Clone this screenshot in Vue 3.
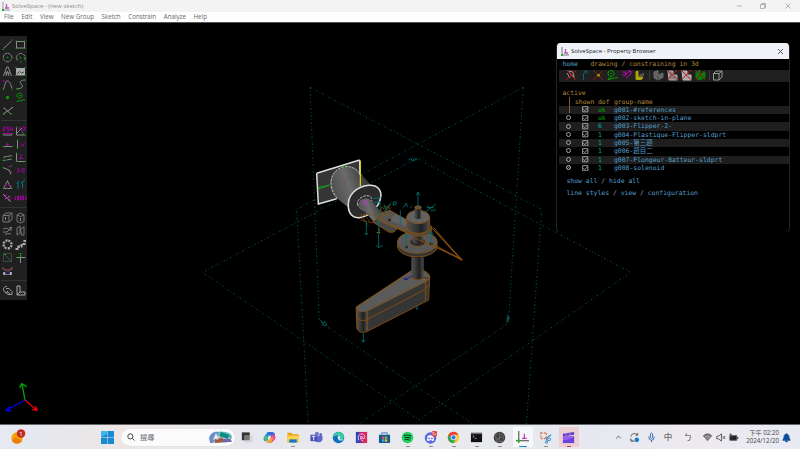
<script setup>
const menus = ['File', 'Edit', 'View', 'New Group', 'Sketch', 'Constrain', 'Analyze', 'Help']

const G = '#00a000', W = '#8a8a8a', M = '#a000a0', T = '#007878'
// each entry is [path, stroke colour, fill colour, stroke width, dash pattern]
const toolGroups = [
  [
    [['M2.5 10.5 10.5 3', W], ['M1.5 11.5h1.5M10.5 2h1.5', G]],
    [['M2.5 3.5h8v6.500h-8z', W], ['M1.500 3h1.500M10 3h1.500M1.500 10.500h1.500M10 10.500h1.500', G]],
    [['M6.500 2.200a4.300 4.300 0 1 0 .1 0', W, 'none', 1, '3 .8'], ['M5.800 6.500h1.500', G, 'none', 1.5], ['M10.500 6.500h1', G]],
    [['M3.500 9.500a4.300 4.300 0 1 1 7-.5', W, 'none', 1, '3 .8'], ['M5.800 6.500h1.500', G, 'none', 1.5], ['M6 11h1.500M10 8.500h1.500M1.500 6.500h1', G]],
    [['M2.500 11 5.800 2h1.400l3.300 9M4 8h5M5 11l1.500-5L8 11', W]],
    [['M2.500 3.500h8V10h-8z', '#aaa', '#aaa'], ['M3 9l2.500-2.500 2 1.500L10 7', '#444'], ['M1 2.500h1.500M10.500 2.500H12M1 10.500h1.500M10.500 10.500H12', G]],
    [['M2.500 11C4 8 4 3 6.500 3s3 4 4.500 7', W], ['M1.500 3h3', M], ['M1.500 11.500H3M10.500 11H12', G]],
    [['M11 2C7 2 5 4 7 6s3 4-4 5', W], ['M10.500 2H12M2 11h2M6.500 6h1', G]],
    [['M5.500 5.500h2v2h-2z', G, G]],
    [['M5.500 2a2.500 2.500 0 1 0 .1 0M5 4.500h1.500M2.500 10.500 11 8.500', G]],
    [['M2 10 11 4M3 4l7 6', W], ['M2 4h1.500M2 10.500h1.500M10 10h1.500', G], ['M10.500 3.500h1.500', W]]
  ],
  [
    [['M2 9.500h9M2 3h2v2H2v2h2M6 7h2V5H6V3h2M9.500 3v2.500H12M11.500 3v4', M], ['M2 11h9', W], ['M1 10.200h1M11 10.200h1', G]],
    [['M2.500 11V3.500M2.500 11h8M3 9l5-5', W], ['M4 4h3M8 3h3v3H8v2', M], ['M2 3h1M10.500 11H12M8 8l2 2', G]],
    [['M2 8.500h9', W], ['M5 6.500h3M6.500 5v3', M], ['M1.500 8.500H3M10 8.500h2', G]],
    [['M3.500 2v9', W], ['M6.500 5l2 3.500 2-3.500', M], ['M3 2h1M3 10.500h1', G]],
    [['M3 6l3-.5M7 5.300l4-.7M2 9.500l3-.5M6 9l4-1', W], ['M1.500 9.500h1.500M6 5.500h1M2 6.500h1M10 8.500h1', G]],
    [['M2.500 2v8.500H11', W], ['M7 3v4.500M5 7.500h4', M], ['M2 2h1M2 10.500h1.500M10.500 10.500H12', G]],
    [['M3 4 8 6l2 4.500M2 4h1', W], ['M7 3l3-1M9 6l2 3', M], ['M1.500 3.500H3M7 6h1.500M9.500 2H11', G]],
    [['M3 5h2v3H3M8 5h3M8 5v3h3', M]],
    [['M6.500 3 2.500 10.500h8z', W], ['M4 6.500l2 .5M9 6.500l-2 .5M6.500 9v2.500', M], ['M6 2.500h1M1.500 10.500h2M9.500 10.500h2', G]],
    [['M4 11V4M2.500 6 5.500 3M8.500 10V4M7 5l4-3', T]],
    [['M2 3l8 8M4 8l5-3', W], ['M3 6l3-3M7 10l3-3M5 6l3 2', M]],
    [['M1.500 5v4M3.500 5v4h1V5zM6.500 5v4M8 5v4h1.500V5zM12 5v4', M]]
  ],
  [
    [['M2 4.500h6V11H2zM2 4.500 5 2h6L8 4.500M11 2v6.500L8 11', '#777'], ['M4.500 6v3', W]],
    [['M3 4l3.500-2L10 4v6.500L6.500 12 3 10.500zM3 4l3.500 1.500L10 4', '#777'], ['M6.500 7v3', W]],
    [['M2 5l3-1 3 1.500 3-1.500M2 8h4l2-2h3M4 10.500l3-1 3 .5M8 3.500h3', '#777']],
    [['M3 4l3-2v7l-3 2zM6.500 5 10 3v8H7.500z', '#777']],
    [['M6.500 2.500a4 4 0 1 0 .1 0', '#aaa', 'none', 2.3, '2 1.100']],
    [['M1.500 11h3V8.500h3V6h3V3H12', '#aaa', 'none', 2.2, '3 1']],
    [['M2.500 2.500h8v8h-8z', '#444'], ['M4 4l6 6', '#286828'], ['M3 3.500h2', G]],
    [['M2 6.500h9.500', W], ['M6.500 3v9', W], ['M5.500 2.500h2M6.500 2v4M2 6.500h1', G]],
    [['M2.500 8.500h8v2h-8z', '#aaa', '#bbb'], ['M4.500 7h4v3h-4z', '#336', '#225'], ['M2 3v2l3 1h3l3-1V3', '#a45050']]
  ],
  [
    [['M6 2.500a3 3 0 1 0 1 5.500M5 4.500h3l3 3v3H7L4 8M6 7l3 3', '#999']],
    [['M3 2h3v6h5v3H3zM6 8l-3 3', '#aaa']]
  ]
]

const R = '#c01818'
const propTools = [
  [['M3 1.500 9.500 9M2 4l3 5M4 2l4 1 1 5', '#999'], ['M1.500 10.500 11 1.500M2 1l8.500 10', R]],
  [['M5.500 11V5L8.500 2M6 3l3-1.500V5', '#08656e']],
  [['M1.500 1.500l9.500 9.500M11 1.500l-9.500 9.500', '#a01808'], ['M5.500 5.500h2v1.500h-2z', '#a09000', '#a09000']],
  [['M5 1.500a3 3 0 1 0 .1 0M4.500 4.500h1.500M1.500 11l4-1.500L12 8.500M2 9l3 1', G]],
  [['M2.500 3h3v3M5 6l5-4M8 2h3v3L6 9M2.500 6h4', '#c000c0']],
  [['M3 2.500 5 2v6h5l-1.500 2.500H3z', '#a8a000', '#b0a418'], ['M6.500 6 10.500 4.500v2l-4 .8z', '#555', '#555']]
]
const propTools2 = [
  [['M2 3l4-1.500V6l5-2v4.500L6 11 2 9z', '#666', '#666'], ['M6 6v5', '#444']],
  [['M2 2h5v4h4v5H3z', '#aaa', '#888'], ['M1 1l10.500 10M11 1 1.500 11', R]],
  [['M2 2h5v4h4v5H3z', '#bbb', '#aaa'], ['M1 1l10.500 10M11 1 1.500 11', R]],
  [['M2 3l4-1.500V5l5-2v6L5 11 2 9z', '#0a7a0a', '#0a7a0a'], ['M1 1l10.500 10M11 1 1.500 11', '#802010']]
]
const groups = [
  { name: 'g001-#references', dof: 'ok' },
  { name: 'g002-sketch-in-plane', dof: 'ok' },
  { name: 'g003-Flipper-2-', dof: '6' },
  { name: 'g004-Plastique-Flipper-sldprt', dof: '1' },
  { name: 'g005-第三題', dof: '1' },
  { name: 'g006-題目二', dof: '1' },
  { name: 'g007-Plongeur-Batteur-sldprt', dof: '1' },
  { name: 'g008-solenoid', dof: '1' }
]
</script>

<template>
  <div class="screen">
    <header class="titlebar">
      <svg class="logo" viewBox="0 0 9 9"><path d="M2 0v8h7" stroke="#999" fill="none" /><path d="M5.500 2v4M4 6h4" stroke="#c050c0" fill="none" stroke-width="1.300" /><path d="M1 7h2v2H1z" fill="#20b020" /></svg>
      <span class="caption main">SolveSpace - (new sketch)</span>
      <svg class="winctl" viewBox="0 0 60 12"><path d="M2 6h5M50.500 3.500l5 5M55.500 3.500l-5 5" /><path d="M25.500 4.500h4v4h-4zM27 4.500v-1h3.500v4h-1" /></svg>
    </header>
    <nav class="menubar"><span v-for="m in menus" :key="m">{{ m }}</span></nav>

    <main class="workspace">
      <svg class="scene" viewBox="-570 -141 2400 1206" preserveAspectRatio="none">
        <defs>
          <linearGradient id="barrel" x1="0" y1="0.600" x2="1" y2="0.250"><stop offset="0" stop-color="#4a4a4a" /><stop offset=".45" stop-color="#6b6b6b" /><stop offset="1" stop-color="#252525" /></linearGradient>
          <linearGradient id="post"><stop offset="0" stop-color="#505050" /><stop offset=".35" stop-color="#393939" /><stop offset=".65" stop-color="#202020" /><stop offset="1" stop-color="#505050" /></linearGradient>
        </defs>
        <g class="planes">
          <path d="M360 52 1055 418 1009 1065M360 52l28 703L852 1065" />
          <path d="M1000 52 320 418l35 647M1000 52 955 760 510 1060" />
          <path d="M680 265 38 607 687 1050 1322 607z" />
        </g>
        <g class="teal">
          <path d="M655 270l8-5 3 8 9-10M670 273l12-7M392 750l7 12 4-8 8 12M397 765l12 2M950 757l3-17 5 2-5 14M954 740v-6" />
        </g>

        <path d="M380 310 509 270 513 347 573 375 437 386 385 402z" fill="#353535" />
        <path d="M513 347 573 376 440 386z" fill="#000" />
        <path d="M420 351C414 318 446 289 478 290c16 0 27 7 35 22l33 36-70 65-37-30C427 374 422 364 420 351z" fill="url(#barrel)" />
        <path class="white" d="M380 310 509 270M380 310l5 92 55-16M509 270l1 45" />
        <path class="fine" d="M442 385C408 345 422 296 466 290c20-3 38 10 47 28" />
        <path d="M511 272v76" stroke="#dddd00" stroke-width="3.500" />
        <path d="M385 357l34-12M386 352l31-6M457 291h8" stroke="#18b018" stroke-width="3" stroke-dasharray="5 1" />
        <path d="M420 344l88-28" stroke="#386050" stroke-width="1.500" stroke-dasharray="4 5" />
        <path d="M463 330v9" stroke="#a030a0" stroke-width="3" />
        <path class="white" d="M475 411C472 374 500 350 536 346c25-2 40 13 36 36-5 30-32 56-64 61-20 1-32-12-33-32z" fill="#2b2b2b" />
        <path class="fine" d="M503 405c-4-14 12-28 28-28 10 0 14 5 14 14v22l-32 5z" />
        <path d="M504 404c4-15 25-24 38-14l42 48-27 25-34-39c-8-2-14-8-19-20z" fill="url(#barrel)" />
        <path d="M511 391l19 18M515 388l20 18M522 389l11 10" stroke="#c035c0" stroke-width="2.500" />

        <path d="M548 456l31-27 46 42-13 15-14 1z" fill="#454545" class="orange" />
        <path d="M561 434l39-13 61 36 6 32-14 1-87-39z" fill="#555" class="orange" />
        <path class="orange dots" fill="none" d="M512 432l23 35M520 429l25 32M509 440l31-9 23 12-17 15-33-8M522 455l-12-18M573 412l31-6M574 427l31-14M580 429l-10-11 31-7M582 451c-10-12 2-19 18-14l60 37" />
        <path d="M596 451l22-18 44 21-4 19z" fill="#636363" />
        <path class="orange" fill="none" d="M584 435c-20 11-12 19 3 25l81 29c28 12 54 4 58-15" />

        <ellipse class="orange" cx="682" cy="528" rx="60" ry="33" fill="#353535" />
        <ellipse class="orange" cx="682" cy="517" rx="60" ry="33" fill="#585858" />
        <ellipse class="orange" cx="683" cy="516" rx="24" ry="13" fill="#292929" />
        <path d="M667 487h33v30c-10 8-22 8-33 0z" fill="url(#post)" />
        <path class="orange" d="M648 475c10 22 68 24 77-7l-2 19c-15 17-55 14-75-2z" fill="#484848" />
        <path d="M650 441v34c7 20 62 20 69 0v-34z" fill="url(#post)" class="orange" />
        <ellipse class="orange" cx="684.500" cy="441" rx="34" ry="20" fill="#626262" />
        <path d="M674 413v30c4 5 16 5 20 0v-30z" fill="url(#post)" />
        <ellipse class="orange" cx="684" cy="412" rx="10" ry="4.500" fill="#555" />
        <path class="orange" d="M672 503l70 31 75 36L723 471M740 528l76 43-85-98M736 531l79 35M719 466l95 105" fill="none" />
        <path d="M645 531h9M718 521h10M594 450h9" stroke="#392207" stroke-width="7" />

        <path class="orange" d="M499 711 665 602c24-5 49-1 54 17l-3 71-186 95c-15 6-27 0-29-10z" fill="#353535" />
        <path class="orange" d="M499 711 665 602c27-5 52 2 54 22l-8 9-181 91c-18 7-31-1-31-13z" fill="#5b5b5b" />
        <path d="M501 718v55c5 15 25 15 30 6v-55c-15 5-27 2-30-6z" fill="url(#post)" />
        <path class="orange" fill="none" d="M499 711v33c8 8 22 10 33 4l174-90 11-15M533 723v59M707 631v64M500 742l2 36" />
        <path d="M664 562h37v60c-5 11-32 11-37 0z" fill="url(#post)" /><path class="orange" fill="none" d="M664 622c7 10 30 10 37 0" />
        <path d="M668 618l-22 9m-3-5 1 7 9-1" stroke="#202088" stroke-width="3" fill="none" />
        <path d="M700 622l15 4m-5-4 5 4" stroke="#6c2515" stroke-width="3" fill="none" />
        <g class="teal">
          <path d="M684 408v-42m-5 10 5-10 5 10M649 535v-42m-6 10 6-10 6 10M724 521v-36m-6 9 6-9 6 9M566 448v84m-7-6 7 7 12-7M529 455v39m-4-5 4 6 4-6M631 421v44M520 790v26m-5-6 5 7 6-7M681 708v9m-4-3 4 4 4-4M570 435v-42M585 424l18-26M610 408v-12h10l-4 8h-5M640 413l9-14 3 12M708 425l29-23M711 407l10 8M722 423l16-4M659 415l8-8M550 386l25-4M711 413h20M590 421l-8-17M550 398l21-3" />
        </g>
        <path class="dots" fill="none" stroke-width="2.500" d="M560 487l10 2-4-15" stroke="#999019" />
        <g class="axes">
          <path d="M-495 990-504 942M-511 954l6-13 15 9" stroke="#00a800" />
          <path d="M-495 990-551 1021M-541 1009l-11 12 17 2" stroke="#0000dc" />
          <path d="M-495 990-460 1021M-464 1008l5 13-15-3" stroke="#ec0000" />
        </g>
      </svg>

      <aside class="tools">
        <div v-for="(group, i) in toolGroups" :key="i" class="toolgroup">
          <svg v-for="(icon, j) in group" :key="j" viewBox="0 0 13 13">
            <path v-for="(p, k) in icon" :key="k" :d="p[0]" :stroke="p[1]" :fill="p[2] || 'none'" :stroke-width="p[3] || 1" :stroke-dasharray="p[4]" />
          </svg>
        </div>
      </aside>

      <section class="browser">
        <header class="browser-title">
          <svg class="logo" viewBox="0 0 9 9"><path d="M2 0v8h7" stroke="#777" fill="none" /><path d="M5.500 2v4M4 6h4" stroke="#c050c0" fill="none" stroke-width="1.300" /><path d="M1 7h2v2H1z" fill="#20b020" /></svg>
          <span class="caption">SolveSpace - Property Browser</span>
          <svg class="close" viewBox="0 0 7 7"><path d="M1 1l5 5M6 1 1 6" /></svg>
        </header>
        <div class="crumbs"><span class="link">home</span><span class="gold">drawing / constraining in 3d</span></div>
        <div class="proptools">
          <svg v-for="(icon, i) in propTools" :key="i" viewBox="0 0 13 13"><path v-for="(p, k) in icon" :key="k" :d="p[0]" :stroke="p[1]" :fill="p[2] || 'none'" /></svg>
          <i></i>
          <svg v-for="(icon, i) in propTools2" :key="'b' + i" viewBox="0 0 13 13"><path v-for="(p, k) in icon" :key="k" :d="p[0]" :stroke="p[1]" :fill="p[2] || 'none'" /></svg>
          <i></i>
          <svg viewBox="0 0 13 13"><path d="M1.500 4.500H7V11H1.500zM1.500 4.500 4 2h6L7 4.500M10 2v6L7 11" stroke="#999" fill="none" /></svg>
        </div>
        <div class="gold active"><span>active</span><i class="pointer"></i></div>
        <div class="row head gold"><span></span><span class="shown">shown</span><span>dof</span><span>group-name</span></div>
        <div v-for="(g, i) in groups" :key="g.name" class="row" :class="{ shade: i % 2 === 0 }">
          <span><b v-if="i" class="radio" :class="{ on: i === 7 }"></b></span>
          <span><svg class="check" viewBox="0 0 7 7"><path d="M.7.7h5.600v5.600H.7z" /><path d="M1.500 3.500l1.500 1.500 2.700-3" /></svg></span>
          <span :class="g.dof === 'ok' ? 'ok' : 'num'">{{ g.dof }}</span>
          <span class="link">{{ g.name }}</span>
        </div>
        <div class="links first"><span>show all</span> / <span>hide all</span></div>
        <div class="links"><span>line styles</span> / <span>view</span> / <span>configuration</span></div>
      </section>
    </main>

    <footer class="taskbar">
      <div class="widget"><svg viewBox="0 0 16 16"><circle cx="7" cy="9" r="5.700" fill="#f6a40b" /><path d="M2 12a6 6 0 0 0 10 0l-7-4z" fill="#ed7e0c" /><circle cx="11" cy="4.500" r="4.300" fill="#c42b25" /><text x="11" y="6.800" text-anchor="middle" fill="#fff" font-size="6">1</text></svg></div>
      <svg class="start" viewBox="0 0 13 13"><path d="M0 0h6v6H0zM6.500 0H13v6H6.500zM0 6.500h6V13H0zM6.500 6.500H13V13H6.500z" fill="#168bd2" /><path d="M0 0h6v3L0 6z" fill="#38b8ee" /></svg>
      <div class="search">
        <svg class="lens" viewBox="0 0 9 9"><circle cx="3.800" cy="3.800" r="2.900" /><path d="M6 6l2.500 2.500" /></svg><span>搜尋</span>
        <svg class="bing" viewBox="0 0 25 13"><ellipse cx="13" cy="6" rx="11" ry="5.500" fill="#57b7bc" /><path d="M1 7c1-4 5-7 9-6l-3 11H2z" fill="#6a8fcb" /><path d="M8 7l4-5 7 2 5 6-7 2H5z" fill="#b5c5df" /><path d="M13 1l8 3-1 4-9-3z" fill="#128c7f" /><path d="M6 5l3 4 5-3 2 5-9 1z" fill="#a65a3d" /><path d="M15 8h7l2 3h-9z" fill="#7165ac" /><path d="M8 2l2 5-5 2z" fill="#eee" /></svg>
      </div>
      <div class="apps">
        <div class="app"><svg viewBox="0 0 14 14"><path d="M2 1.500h8.500V10H2z" fill="#333" /><path d="M5 5h8.500v7.500H5z" fill="#d8d8d8" /><path d="M5 5h5.500v5H5z" fill="#777" /></svg></div>
        <div class="app"><svg viewBox="0 0 14 14"><path d="M2 5 5 1h5L7 7l-3 4H2Q-1 8 2 5z" fill="#168ed5" /><path d="M5 1h5q3 0 3 4L8 7z" fill="#3b6ad8" /><path d="M1 6l4-1-1 6H2z" fill="#58bc72" /><path d="M12 4q3 3 0 6l-3 3H4L8 5z" fill="#e94f8d" /><path d="M4 13l2-5 5-1-2 6z" fill="#f3a43d" /><path d="M6 5h2.500L7.500 9H5z" fill="#eee" /></svg></div>
        <div class="app run"><svg viewBox="0 0 14 14"><path d="M1 2h4l2 1.500h6V12H1z" fill="#e9a51b" /><path d="M1 5h12v6H1z" fill="#ffd34e" /><path d="M3 9h8v3.500H3z" fill="#1676c4" /></svg></div>
        <div class="app"><svg viewBox="0 0 14 14"><circle cx="8" cy="3" r="2.200" fill="#7378d4" /><circle cx="12" cy="4" r="1.500" fill="#5059c0" /><path d="M5 5h9v4q-1 4-5 3-4 0-4-3z" fill="#6065c8" /><path d="M1 4h7v7H1z" fill="#464eb8" /><path d="M2.500 5.700h4M4.500 5.700V10" stroke="#fff" /></svg></div>
        <div class="app"><svg viewBox="0 0 14 14"><circle cx="7" cy="7" r="6.200" fill="#0c72be" /><path d="M1 6C2 0 12-1 13 6c0 4-6 5-6 2 1-2 0-4-3-3Q2 5 1 7z" fill="#39c9a5" /><path d="M7 5c2 0 2 2 1 3 1 2 4 1 5 0l-1.500 2Q8 11 6.500 8.500 5.500 6 7 5z" fill="#e0edf3" /></svg></div>
        <div class="app"><svg viewBox="0 0 14 14"><path d="M1 1h12v12H1z" fill="#b8256d" /><path d="M1 1h3l2 12H1z" fill="#2f45b8" /><path d="M8 1h5v12H9z" fill="#dc2862" /><path d="M4 10Q2 4 7 3q5 1 3 5-2 1-2-1V6H6v2h2M6 9l3 2" stroke="#e8d2f2" fill="none" /></svg></div>
        <div class="app"><svg viewBox="0 0 14 14"><path d="M1 4h12v8q0 1-1 1H2q-1 0-1-1z" fill="#185a92" /><path d="M4 4V2h6v2" fill="none" stroke="#3a81b4" /><path d="M4.500 6H7v2.500H4.500z" fill="#f05a30" /><path d="M7.500 6H10v2.500H7.500z" fill="#78bc35" /><path d="M4.500 9H7v2.500H4.500z" fill="#31b2ea" /><path d="M7.500 9H10v2.500H7.500z" fill="#f7bf28" /></svg></div>
        <div class="app run"><svg viewBox="0 0 14 14"><circle cx="7" cy="7" r="6.200" fill="#1ed65f" /><path d="M3 5q4-1.500 8 .5M3.500 7.300q4-1 7 .5M4 9.500q3-.8 5.500.4" stroke="#143820" stroke-width="1.200" fill="none" /></svg></div>
        <div class="app run"><svg viewBox="0 0 14 14"><circle cx="7" cy="7.500" r="6.200" fill="#5865e8" /><path d="M3 10l1-5 2-.5h2l2 .5 1 5-2 1-1-1H6l-1 1z" fill="#fff" /><circle cx="5.500" cy="8" r="1" fill="#5865e8" /><circle cx="8.500" cy="8" r="1" fill="#5865e8" /><circle cx="11.200" cy="3" r="3.300" fill="#db4b4e" /><text x="11.200" y="4.700" text-anchor="middle" font-size="4" fill="#fff">9+</text></svg></div>
        <div class="app run"><svg viewBox="0 0 14 14"><circle cx="7" cy="7" r="6.200" fill="#fdc72f" /><path d="M1.600 4A6.200 6.200 0 0 1 12.400 4H7L4 8z" fill="#e84134" /><path d="M1.600 4A6.200 6.200 0 0 0 7 13.200L9.500 9 5 9z" fill="#31a755" /><circle cx="7" cy="7" r="3" fill="#fff" /><circle cx="7" cy="7" r="2.300" fill="#347ee8" /></svg></div>
        <div class="app run"><svg viewBox="0 0 14 14"><path d="M1 2h12v10H1z" fill="#111" /><path d="M1 2h12v1.500H1z" fill="#666" /><path d="M3 5l1.500 1L3 7M5 8h2" stroke="#ddd" stroke-width=".7" fill="none" /></svg></div>
        <div class="app run"><svg viewBox="0 0 14 14"><circle cx="7" cy="7" r="6.200" fill="#3b3b3b" /><path d="M2 5l5-3 5 4-2 6-6-1zM2 5l8 7M7 2v10M12 6 3 9M4 11 10 3" stroke="#777" stroke-width=".6" fill="none" /></svg></div>
        <div class="app current"><svg viewBox="0 0 14 14"><path d="M3 0v13M0 10.500h14" stroke="#333" fill="none" /><path d="M9 3v5M6.500 8h5" stroke="#cb35bd" fill="none" stroke-width="1.300" /><path d="M1.700 9.200h2.500v2.500H1.700z" fill="#20c020" /></svg></div>
        <div class="app run"><svg viewBox="0 0 14 14"><path d="M2 2h6v6H2z" stroke="#e26e52" fill="none" stroke-width="1.500" stroke-dasharray="2 1.200" /><path d="M8 8l5-4M8 7l1 5" stroke="#2988c9" stroke-width="1.200" /><circle cx="11" cy="9" r="1.500" stroke="#2988c9" fill="none" /><circle cx="8" cy="12" r="1.300" stroke="#2988c9" fill="none" /></svg></div>
        <div class="app alert"><svg viewBox="0 0 14 14"><path d="M1 3 13 1v3L1 6z" fill="#6040c8" /><path d="M1 5.500h12V13H1z" fill="#9d5cf0" /><path d="M1 10q7 0 12-4v7H1z" fill="#6a42dd" /><path d="M5 2l-1 3M9 1.500 8 5" stroke="#b47cf0" /></svg></div>
      </div>
      <div class="tray">
        <svg class="t1" viewBox="0 0 12 12"><path d="M3.500 7 6 4.500 8.500 7" /></svg>
        <svg class="t2" viewBox="0 0 12 12"><path d="M2 5a4 4 0 0 1 7-2M9.500 1v2.500H7M2 7v3h2.500M2 8q2 3 4 2" /><circle cx="8.500" cy="8.500" r="2" fill="#0879d6" stroke="#0879d6" /></svg>
        <svg class="t3" viewBox="0 0 12 12"><path d="M4.800 2q1.200-2 2.400 0v4q-1.200 2-2.400 0zM3 5q0 4 3 4t3-4M6 9v2" stroke="#2865a8" /></svg>
        <span class="ime">中</span><span class="ime bopo">ㄅ</span>
        <svg class="t4" viewBox="0 0 12 12"><path d="M1.500 4Q6 0 10.500 4L6 9.500z" fill="#777" stroke="#666" /><path d="M3 5.500q3-2 6 0M4.500 7.500q1.500-1 3 0" stroke="#ddd" stroke-width=".6" /></svg>
        <svg class="t5" viewBox="0 0 12 12"><path d="M2 4.500h2l3-2.500v8L4 7.500H2zM8.500 4.500l2.500 3M11 4.500l-2.500 3" /></svg>
        <svg class="t6" viewBox="0 0 12 12"><path d="M2 4h7.500v5H2z" fill="#222" /><path d="M10.500 5.500v2M2 2l3 3" stroke-width="1.500" /></svg>
        <div class="clock"><span>下午 02:20</span><span>2024/12/20</span></div>
        <svg class="bell" viewBox="0 0 12 12"><path d="M2 9q1.500-2 1.500-5Q6 0 8.500 4 8.500 7 10 9zM5 10h2v.5H5z" fill="#0b4e9b" stroke="#0b4e9b" /></svg>
      </div>
    </footer>
  </div>
</template>

<style>
body { margin: 0; overflow: hidden; background: #000; }
</style>
<style scoped>
* { box-sizing: border-box; }
.screen { width: 800px; height: 449px; display: flex; flex-direction: column; background: #000; font-family: "Open Sans", "Noto Sans CJK TC", sans-serif; }
svg { display: block; flex: none; }
.titlebar { height: 12px; background: #f3f3f3; display: flex; align-items: center; padding-left: 1px; flex: none; }
.logo { width: 9px; height: 9px; }
.caption { font-size: 5.940px; line-height: 10px; margin-left: 2.500px; color: #222; white-space: nowrap; }
.caption.main { color: #8b8b8b; margin-left: 2px; font-size: 6px; }
.winctl { width: 60px; height: 12px; margin-left: auto; margin-right: 5px; fill: none; stroke: #999; stroke-width: .7; }
.menubar { height: 11px; background: #fff; border-bottom: 1px solid #555; display: flex; gap: 7.600px; padding-left: 4px; font-size: 6.200px; line-height: 10px; color: #666; flex: none; white-space: nowrap; }
.workspace { position: relative; height: 402px; display: flex; justify-content: space-between; align-items: flex-start; background: #000; border-bottom: 1px solid #666; flex: none; }
.scene { position: absolute; left: 0; top: 0; width: 800px; height: 402px; }
.planes path { fill: none; stroke: #006c6c; stroke-width: 2.200; stroke-dasharray: 5 7 2 7; }
.teal { fill: none; stroke: #007474; stroke-width: 2.500; }
.axes { fill: none; stroke-width: 4; }
.dots { stroke-dasharray: 5 3; }
.white { fill: none; stroke: #dedede; stroke-width: 4.500; }
path.white[fill] { fill: #2b2b2b; }
.fine { stroke: #bbb; stroke-width: 3; stroke-dasharray: 8 3; fill: none; }
.orange { stroke: #87500b; stroke-width: 2.700; }
.tools { position: relative; width: 27px; height: 264px; margin-top: 13px; padding-top: 2px; background: #202020; }
.toolgroup { display: grid; grid-template-columns: 13px 13px; grid-auto-rows: 13.300px; column-gap: .5px; padding-left: .5px; margin-bottom: 6.700px; position: relative; }
.toolgroup + .toolgroup::before { content: ''; position: absolute; left: 1px; right: 1px; top: -4px; height: 1px; background: #333; }
.toolgroup svg { width: 13px; height: 13px; }
.browser { position: relative; margin: 20px 10px 0 0; width: 234px; height: 191px; border: 1px solid #242424; border-top: 0; border-bottom-color: #000; border-radius: 4px 4px 6px 6px; background: #000; font: 6.430px/8.300px "DejaVu Sans Mono", "Noto Sans CJK TC", monospace; color: #999; white-space: pre; overflow: hidden; }
.browser-title { height: 16px; background: #eff3f9; display: flex; align-items: center; padding: 0 4px 0 2.500px; font-family: "Open Sans", sans-serif; }
.close { width: 7px; height: 7px; margin-left: auto; fill: none; stroke: #333; stroke-width: .8; margin-right: 1px; }
.crumbs { height: 10.500px; padding: 1.200px 0 0 5.500px; display: flex; gap: 12.500px; }
.link { color: #559fca; }
.gold { color: #b3883f; }
.proptools { height: 12.500px; background: #202020; display: flex; align-items: center; padding-left: 5.500px; margin-left: 2px; }
.proptools svg { width: 13px; height: 13px; margin-right: .8px; }
.proptools i { width: 1px; height: 9px; background: #3b3b3b; margin: 0 2.500px 0 1.500px; }
.active { height: 8.500px; margin-top: 7px; padding-left: 5.500px; }
.pointer { position: absolute; left: 12px; top: 54px; width: 1px; height: 16px; background: #84612a; }
.row { display: grid; grid-template-columns: 17px 22px 16px 1fr; height: 8.300px; margin-left: 2px; align-items: center; }
.row > span:first-child { padding-left: 7.400px; }
.row > span { height: 8.300px; }
.row .shown { margin-left: -1px; }
.head { position: relative; }
.shade { background: #1e1e1e; }
.radio { display: block; width: 5px; height: 5px; border: 1px solid #a5a5a5; border-radius: 50%; margin-top: 1.200px; }
.radio.on { background: #999; box-shadow: inset 0 0 0 1px #000; }
.check { width: 6.500px; height: 6.500px; margin: .7px 0 0 6px; fill: none; stroke: #aaa; }
.ok { color: #00a600; }
.num { color: #00aa9a; }
.links { padding-left: 9.500px; margin-top: 4.200px; }
.links.first { margin-top: 4.400px; }
.links span { color: #559fca; }
.taskbar { position: relative; height: 24px; background: linear-gradient(90deg, #e5e9f2 0, #e9e8eb 10%, #eee6e5 15%, #e7e7ef 32%, #e9eaed 55%, #e7e8f0 76%, #eee9ef 87%, #e8eaf3); display: flex; align-items: center; flex: none; }
.widget { width: 101px; padding-left: 10px; }
.widget svg { width: 16px; height: 16px; }
.start { width: 13px; height: 13px; }
.search { width: 114px; height: 17px; margin-left: 7px; border-radius: 9px; background: #fbfbfc; box-shadow: 0 0 0 .5px #ddd; display: flex; align-items: center; padding: 0 2px 0 6px; font-size: 7.200px; color: #666; }
.search span { margin-top: -1px; }
.lens { width: 8px; height: 8px; margin-right: 5px; fill: none; stroke: #333; }
.bing { width: 25px; height: 13px; margin-left: auto; }
.apps { display: flex; }
.app { width: 23px; height: 24px; display: flex; justify-content: center; align-items: center; position: relative; }
.app svg { width: 13px; height: 13px; }
.app:nth-child(3) svg, .app:nth-child(4) svg { width: 14px; height: 13px; }
.run::after, .current::after, .alert::after { content: ''; position: absolute; bottom: 2px; width: 4px; height: 1px; border-radius: 1px; background: #888; }
.current { background: linear-gradient(#f6f7f9, #f6f7f9) center / 20px 20px no-repeat; }
.current::after { width: 8px; background: #2080ca; }
.alert { background: linear-gradient(#ead0d3, #ead0d3) center / 20px 20px no-repeat; }
.alert::after { background: #c53632; width: 4px; }
.tray { flex: 1; display: flex; align-items: center; justify-content: flex-end; padding-right: 8px; }
.tray svg { width: 11px; height: 11px; fill: none; stroke: #555; }
.t1, .t2 { margin-right: 5.500px; }
.t3 { margin-right: 6.500px; }
.ime { width: 10px; font-size: 8.500px; line-height: 12px; text-align: center; color: #444; margin-right: 10px; }
.bopo { margin-right: 9px; }
.t4, .t5 { margin-right: 2px; }
.clock { width: 40px; font-size: 6.200px; line-height: 8.500px; display: flex; flex-direction: column; text-align: right; color: #444; margin-right: 2px; white-space: nowrap; }
.bell { width: 10px; }
</style>
